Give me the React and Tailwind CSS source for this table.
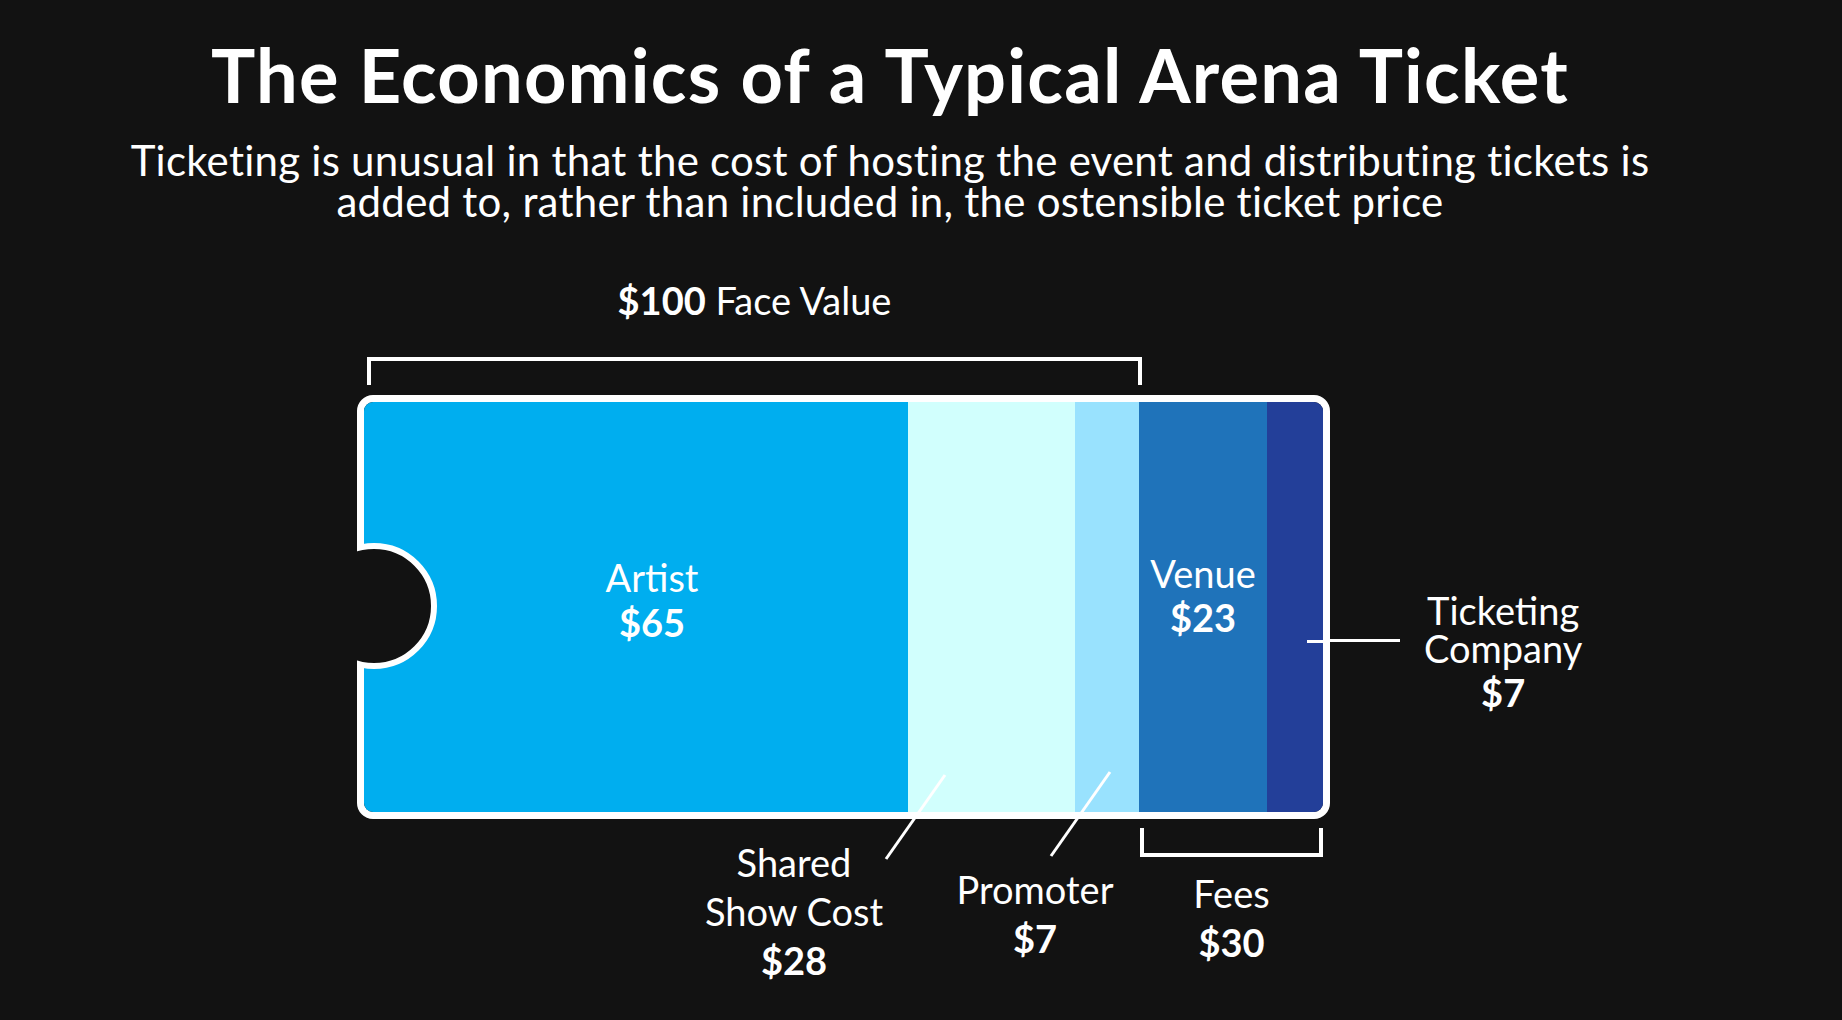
import React from "react";

// segments of the $130 all-in price, widths in px inside the ticket
const segments = [
  { key: "artist", width: 544, color: "bg-[#00AEEF]" },
  { key: "shared", width: 167, color: "bg-[#D1FFFD]" },
  { key: "promoter", width: 64, color: "bg-[#99E2FE]" },
  { key: "venue", width: 128, color: "bg-[#1F73BA]" },
  { key: "ticketing", width: 56, color: "bg-[#233F99]" },
];

function Segment({ seg }) {
  return (
    <div
      className={`relative h-full shrink-0 ${seg.color}`}
      style={{ width: seg.width }}
    >
      {seg.key === "artist" && (
        <div className="flex flex-col items-center pt-[153px] pl-[32px] text-[38px] leading-[45px]">
          <span>Artist</span>
          <span className="font-bold">$65</span>
        </div>
      )}
      {seg.key === "venue" && (
        <div className="flex flex-col items-center pt-[149px] text-[38px] leading-[44px]">
          <span>Venue</span>
          <span className="font-bold">$23</span>
        </div>
      )}
      {seg.key === "ticketing" && (
        <div className="absolute right-0 top-[238px] h-[3px] w-[16px] bg-white" />
      )}
    </div>
  );
}

export default function App() {
  return (
    <div className="relative h-[1020px] w-[1842px] overflow-hidden bg-[#121212] font-[Lato,'Noto_Sans',sans-serif] text-white">
      {/* header */}
      <div className="pr-[62px] pt-[38px] text-center">
        <h1 className="whitespace-nowrap text-[74px] font-bold leading-[74px] tracking-[1.2px]">
          The Economics of a Typical Arena Ticket
        </h1>
        <p className="mt-[28px] whitespace-nowrap text-[42px] leading-[41px] tracking-[0.25px]">
          Ticketing is unusual in that the cost of hosting the event and distributing tickets is
          <br />
          added to, rather than included in, the ostensible ticket price
        </p>
      </div>

      {/* chart */}
      <div className="mt-[59px] pl-[357px]">
        <div className="ml-[10px] w-[775px] text-center text-[38px] leading-[38px]">
          <span className="font-bold">$100</span> Face Value
        </div>
        <div className="ml-[10px] mt-[38px] h-[28px] w-[775px] border-x-4 border-t-4 border-white" />

        <div className="mt-[10px] flex items-start">
          <div className="flex h-[424px] w-[973px] shrink-0 overflow-hidden rounded-[16px] border-[7px] border-white">
            {segments.map((seg) => (
              <Segment key={seg.key} seg={seg} />
            ))}
          </div>
          <div className="mt-[244px] h-[3px] w-[70px] bg-white" />
          <div className="ml-[24px] mt-[196px] flex flex-col items-center text-[38px] leading-[38px]">
            <span>Ticketing</span>
            <span>Company</span>
            <span className="mt-[6px] font-bold">$7</span>
          </div>
        </div>

        <div className="flex items-start">
          <div className="ml-[317px] mt-[19px] flex w-[240px] flex-col items-center text-[38px] leading-[49px]">
            <span>Shared</span>
            <span>Show Cost</span>
            <span className="font-bold">$28</span>
          </div>
          <div className="ml-[46px] mt-[46px] flex w-[150px] flex-col items-center text-[38px] leading-[49px]">
            <span>Promoter</span>
            <span className="font-bold">$7</span>
          </div>
          <div className="ml-[30px] mt-[9px] flex w-[183px] flex-col items-center">
            <div className="h-[29px] w-full border-x-4 border-b-4 border-white" />
            <div className="mt-[12px] flex flex-col items-center text-[38px] leading-[49px]">
              <span>Fees</span>
              <span className="font-bold">$30</span>
            </div>
          </div>
        </div>
      </div>

      {/* ticket notch and leader lines */}
      <svg
        className="pointer-events-none absolute inset-0"
        width="1842"
        height="1020"
        viewBox="0 0 1842 1020"
      >
        <circle cx="374" cy="606" r="60" fill="#121212" stroke="#fff" strokeWidth="6" />
        <rect x="300" y="530" width="57" height="160" fill="#121212" />
        <line x1="945" y1="775" x2="886" y2="859" stroke="#fff" strokeWidth="3" />
        <line x1="1110" y1="772" x2="1051" y2="856" stroke="#fff" strokeWidth="3" />
      </svg>
    </div>
  );
}
